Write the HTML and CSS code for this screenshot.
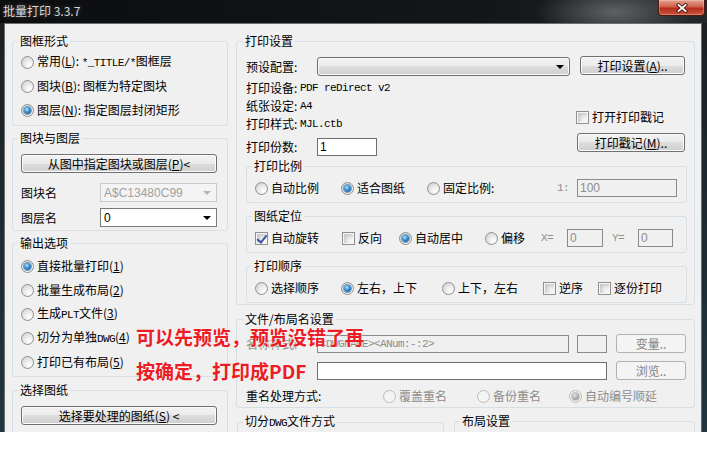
FILE: index.html
```html
<!DOCTYPE html>
<html>
	<head>
		<meta charset="UTF-8">
		<title>批量打印 3.3.7</title>
		<link rel="stylesheet" href="styles.css">
	</head>
	<body>
		<div class="window">
			<div class="titlebar">
				<span class="title">批量打印 3.3.7</span>
				<div class="close">
					<svg width="14" height="10" viewBox="0 0 14 10">
						<path d="M3.5 2 L10.5 8 M10.5 2 L3.5 8" stroke="#4a160d" stroke-width="3.6" stroke-linecap="square" fill="none"/>
						<path d="M3.5 2 L10.5 8 M10.5 2 L3.5 8" stroke="#fff" stroke-width="1.8" stroke-linecap="square" fill="none"/>
					</svg>
				</div>
			</div>
			<div class="frame">
				<div class="client">
					<div class="col-left">
						<fieldset class="grp g1">
							<legend>图框形式</legend>
							<label class="opt r24"><span class="radio"></span><span>常用(<u>L</u>): <span class="mono">*_TITLE/*</span>图框层</span></label>
							<label class="opt r24"><span class="radio"></span><span>图块(<u>B</u>): 图框为特定图块</span></label>
							<label class="opt r24"><span class="radio on"></span><span>图层(<u>N</u>): 指定图层封闭矩形</span></label>
						</fieldset>

						<fieldset class="grp g2">
							<legend>图块与图层</legend>
							<div class="btn"><span>从图中指定图块或图层(<u>P</u>)&lt;</span></div>
							<div class="field-row first">
								<span class="lbl">图块名</span>
								<div class="combo dis"><span>A$C13480C99</span><i class="arrow"></i></div>
							</div>
							<div class="field-row">
								<span class="lbl">图层名</span>
								<div class="combo"><span>0</span><i class="arrow"></i></div>
							</div>
						</fieldset>

						<fieldset class="grp g3">
							<legend>输出选项</legend>
							<label class="opt r24"><span class="radio on"></span><span>直接批量打印(<u>1</u>)</span></label>
							<label class="opt r24"><span class="radio"></span><span>批量生成布局(<u>2</u>)</span></label>
							<label class="opt r24"><span class="radio"></span><span>生成<span class="mono">PLT</span>文件(<u>3</u>)</span></label>
							<label class="opt r24"><span class="radio"></span><span>切分为单独<span class="mono">DWG</span>(<u>4</u>)</span></label>
							<label class="opt r24"><span class="radio"></span><span>打印已有布局(<u>5</u>)</span></label>
						</fieldset>

						<fieldset class="grp g4">
							<legend>选择图纸</legend>
							<div class="btn"><span>选择要处理的图纸(<u>S</u>) &lt;</span></div>
						</fieldset>
					</div>

					<div class="col-right">
						<fieldset class="grp g-print">
							<legend>打印设置</legend>
							<div class="pt">
								<div class="pt-left">
									<div class="row-a">
										<span class="lbl">预设配置:</span>
										<div class="combo btnlike"><span></span><i class="arrow"></i></div>
									</div>
									<div class="info">
										<div>打印设备: <span class="mono">PDF reDirect v2</span></div>
										<div>纸张设定: <span class="mono">A4</span></div>
										<div>打印样式: <span class="mono">MJL.ctb</span></div>
									</div>
									<div class="copies">
										<span class="lbl">打印份数:</span>
										<div class="input w60">1</div>
									</div>
								</div>
								<div class="pt-right">
									<div class="btn w105"><span>打印设置(<u>A</u>)..</span></div>
									<label class="opt stamp"><span class="chk"></span><span>打开打印戳记</span></label>
									<div class="btn w108 stamp-btn"><span>打印戳记(<u>M</u>)..</span></div>
								</div>
							</div>

							<fieldset class="grp sub first">
								<legend>打印比例</legend>
								<div class="row22">
									<label class="opt w86"><span class="radio"></span><span>自动比例</span></label>
									<label class="opt w86"><span class="radio on"></span><span>适合图纸</span></label>
									<label class="opt"><span class="radio"></span><span>固定比例:</span></label>
									<span class="gray mono ratio">1:</span>
									<div class="input dis w100">100</div>
								</div>
							</fieldset>

							<fieldset class="grp sub">
								<legend>图纸定位</legend>
								<div class="row22">
									<label class="opt w87"><span class="chk on"></span><span>自动旋转</span></label>
									<label class="opt w57"><span class="chk"></span><span>反向</span></label>
									<label class="opt w86"><span class="radio on"></span><span>自动居中</span></label>
									<label class="opt w56"><span class="radio"></span><span>偏移</span></label>
									<span class="gray mono w26">X=</span>
									<div class="input dis w36">0</div>
									<span class="gray mono w26 y-lbl">Y=</span>
									<div class="input dis w35">0</div>
								</div>
							</fieldset>

							<fieldset class="grp sub">
								<legend>打印顺序</legend>
								<div class="row22">
									<label class="opt w86"><span class="radio"></span><span>选择顺序</span></label>
									<label class="opt w101"><span class="radio on"></span><span>左右，上下</span></label>
									<label class="opt w101"><span class="radio"></span><span>上下，左右</span></label>
									<label class="opt w55"><span class="chk"></span><span>逆序</span></label>
									<label class="opt"><span class="chk"></span><span>逐份打印</span></label>
								</div>
							</fieldset>
						</fieldset>

						<fieldset class="grp g-file">
							<legend>文件/布局名设置</legend>
							<div class="frow">
								<span class="lbl gray">名称样式:</span>
								<div class="input dis w252"><span class="mono">&lt;DWGNAME&gt;&lt;ANum:-:2&gt;</span></div>
								<div class="input dis w30 gap8"></div>
								<div class="btn dis w70 gap9"><span>变量..</span></div>
							</div>
							<div class="frow second">
								<span class="lbl"></span>
								<div class="input w290"></div>
								<div class="btn dis w70 gap9"><span>浏览..</span></div>
							</div>
							<div class="frow third">
								<span class="lbl wide">重名处理方式:</span>
								<label class="opt w94 gray"><span class="radio dis"></span><span>覆盖重名</span></label>
								<label class="opt w92 gray"><span class="radio dis"></span><span>备份重名</span></label>
								<label class="opt gray"><span class="radio dis on"></span><span>自动编号顺延</span></label>
							</div>
						</fieldset>

						<div class="bottom-row">
							<fieldset class="grp split">
								<legend>切分<span class="mono">DWG</span>文件方式</legend>
							</fieldset>
							<fieldset class="grp layout">
								<legend>布局设置</legend>
							</fieldset>
						</div>
					</div>

					<div class="note">可以先预览，预览没错了再<br>按确定，打印成PDF</div>
				</div>
			</div>
		</div>
	</body>
</html>
```

FILE: styles.css
```css
* {
	margin: 0;
	padding: 0;
	box-sizing: border-box;
}
body {
	background: #fff;
	font: 12px/14px "Noto Sans CJK SC", "Liberation Sans", sans-serif;
	color: #000;
}
u {
	text-decoration: underline;
}
.mono {
	font-family: "Liberation Mono", "Noto Sans CJK SC", monospace;
	font-size: 11px;
	letter-spacing: -0.6px;
}
.gray {
	color: #8d8d8d;
}

/* window chrome */
.window {
	width: 707px;
	height: 432px;
	overflow: hidden;
	display: flex;
	flex-direction: column;
	background: linear-gradient(#1c1f22, #203640);
}
.titlebar {
	height: 23px;
	flex: none;
	display: flex;
	align-items: flex-start;
	padding-left: 3px;
	background:
		radial-gradient(ellipse 80px 28px at 615px 12px, rgba(100,104,108,.9), rgba(100,104,108,0)),
		linear-gradient(to right, #0b0d0f, #14171a 70%, #24282b);
}
.title {
	margin-top: 4px;
	color: #d8d8d8;
	text-shadow: 0 0 5px rgba(255,255,255,.3);
}
.close {
	margin-left: auto;
	margin-right: 2px;
	width: 47px;
	height: 16px;
	border: 1px solid #4d1810;
	border-top: none;
	border-radius: 0 0 4px 4px;
	background: linear-gradient(#e4a190, #d0604a 45%, #b62d1b 55%, #c9563d);
	box-shadow: inset 0 0 0 1px rgba(255,255,255,.25);
	display: flex;
	align-items: center;
	justify-content: center;
}
.frame {
	flex: 1;
	min-height: 0;
	display: flex;
	padding: 0 5px 0 4px;
}
.client {
	flex: 1;
	position: relative;
	display: flex;
	align-items: flex-start;
	gap: 8px;
	padding: 10px 6px 0 7px;
	background: #f0f0f0;
	border: 1px solid #6d6d6d;
	border-bottom: none;
	overflow: hidden;
}
.col-left {
	width: 216px;
	flex: none;
	display: flex;
	flex-direction: column;
}
.col-right {
	width: 459px;
	flex: none;
	display: flex;
	flex-direction: column;
}

/* group boxes */
.grp {
	flex: none;
	border: 1px solid #d5dfe5;
	border-radius: 3px;
	min-width: 0;
	padding: 0 10px 0 8px;
}
legend {
	margin-left: -3px;
	padding: 0 2px;
	line-height: 14px;
}
.g1 {
	padding-top: 2px;
	padding-bottom: 3px;
}
.g2 {
	margin-top: 5px;
	padding-top: 9px;
	padding-bottom: 3px;
}
.g3 {
	margin-top: 5px;
	padding-top: 4px;
	padding-bottom: 2px;
}
.g4 {
	margin-top: 6px;
	padding-top: 9px;
	padding-bottom: 10px;
}

/* controls */
.opt {
	display: flex;
	align-items: center;
	gap: 3px;
	white-space: nowrap;
	flex: none;
}
.r24 {
	height: 24px;
}
.radio {
	width: 13px;
	height: 13px;
	flex: none;
	border-radius: 50%;
	border: 1px solid #8e8f8f;
	background: radial-gradient(circle at 70% 75%, #ffffff 0, #ececec 40%, #cbcbcb 100%);
	display: flex;
	align-items: center;
	justify-content: center;
}
.radio.on::after {
	content: "";
	width: 7px;
	height: 7px;
	border-radius: 50%;
	background: radial-gradient(circle at 40% 35%, #b8e6ff 0, #3a93d8 40%, #0c4785 100%);
	box-shadow: 0 0 0 1px #7c9bb8;
}
.radio.dis {
	border-color: #bcbcbc;
	background: #f4f4f4;
}
.radio.dis.on::after {
	background: radial-gradient(circle at 40% 35%, #e6e6e6 0, #a4a4a4 60%, #8a8a8a 100%);
	box-shadow: 0 0 0 1px #c4c4c4;
}
.chk {
	width: 13px;
	height: 13px;
	flex: none;
	position: relative;
	border: 1px solid #8e8f8f;
	background: #f4f4f4;
	box-shadow: inset 0 0 0 1px #f7f7f7, inset 3px 3px 4px #c4c4c4;
}
.chk.on::after {
	content: "";
	position: absolute;
	left: 3px;
	top: 0;
	width: 4px;
	height: 8px;
	border: solid #3a59a6;
	border-width: 0 2px 2px 0;
	transform: rotate(40deg);
}
.btn {
	height: 19px;
	border: 1px solid #707070;
	border-radius: 3px;
	background: linear-gradient(#f2f2f2 0, #ebebeb 50%, #dddddd 50%, #cfcfcf 100%);
	box-shadow: inset 0 0 0 1px #fbfbfb;
	display: flex;
	align-items: center;
	justify-content: center;
	white-space: pre;
	flex: none;
}
.btn.dis {
	border-color: #adb2b5;
	background: #f4f4f4;
	box-shadow: none;
	color: #838383;
}
.combo {
	flex: 1;
	height: 19px;
	display: flex;
	align-items: center;
	padding: 0 5px 0 3px;
	border: 1px solid #7a7a7a;
	background: #fff;
	font-family: "Liberation Sans", "Noto Sans CJK SC", sans-serif;
}
.combo span {
	flex: 1;
}
.arrow {
	width: 0;
	height: 0;
	border-top: 4px solid #000;
	border-left: 4px solid transparent;
	border-right: 4px solid transparent;
}
.combo.dis {
	border-color: #c9c9c9;
	background: #f4f4f4;
	color: #a0a0a0;
}
.combo.dis .arrow {
	border-top-color: #b4b4b4;
}
.combo.btnlike {
	border-color: #707070;
	border-radius: 3px;
	background: linear-gradient(#f2f2f2 0, #ebebeb 50%, #dddddd 50%, #cfcfcf 100%);
	box-shadow: inset 0 0 0 1px #fbfbfb;
}
.input {
	height: 18px;
	flex: none;
	display: flex;
	align-items: center;
	padding-left: 2px;
	border: 1px solid #6f6f6f;
	background: #fff;
	font-family: "Liberation Sans", "Noto Sans CJK SC", sans-serif;
}
.input.dis {
	background: #f0f0f0;
	color: #8c8c8c;
	border-color: #8a8a8a;
}

/* left column rows */
.field-row {
	display: flex;
	align-items: center;
	height: 19px;
}
.field-row.first {
	margin-top: 10px;
	margin-bottom: 6px;
}
.field-row .lbl {
	width: 79px;
	flex: none;
}

/* print settings */
.g-print {
	padding: 8px 7px 1px 9px;
}
.pt {
	display: flex;
}
.pt-left {
	width: 330px;
	flex: none;
}
.pt-right {
	width: 111px;
	flex: none;
	padding-right: 2px;
	display: flex;
	flex-direction: column;
	align-items: flex-end;
}
.row-a {
	display: flex;
	align-items: center;
	height: 21px;
}
.row-a .lbl,
.copies .lbl {
	width: 71px;
	flex: none;
}
.row-a .combo {
	width: 253px;
	flex: none;
}
.info {
	margin-top: 2px;
}
.info div {
	height: 18px;
	display: flex;
	align-items: center;
	white-space: pre;
}
.copies {
	margin-top: 5px;
	display: flex;
	align-items: center;
	height: 18px;
}
.stamp {
	align-self: flex-start;
	height: 14px;
	margin-top: 35px;
}
.stamp-btn {
	margin-top: 9px;
}
.sub {
	margin-top: 6px;
	padding: 4px 9px 3px 8px;
}
.sub.first {
	margin-top: 3px;
}
.row22 {
	display: flex;
	align-items: center;
	height: 22px;
}
.ratio {
	margin-left: auto;
	margin-right: 8px;
}
.y-lbl {
	margin-left: 9px;
}

/* file names */
.g-file {
	margin-top: 7px;
	padding: 8px 7px 2px 9px;
}
.frow {
	display: flex;
	align-items: center;
	height: 19px;
}
.frow.second {
	margin-top: 8px;
}
.frow.third {
	margin-top: 7px;
	height: 18px;
}
.frow .lbl {
	width: 71px;
	flex: none;
}
.frow .lbl.wide {
	width: 137px;
}
.frow .input {
	color: #8c8c8c;
}
.gap8 {
	margin-left: 8px;
}
.gap9 {
	margin-left: 9px;
}
.bottom-row {
	display: flex;
	gap: 10px;
	margin-top: 6px;
	padding-left: 1px;
	flex: none;
}
.split {
	width: 207px;
	height: 40px;
}
.layout {
	flex: 1;
	height: 40px;
}

/* widths */
.w26 { width: 26px; flex: none; }
.w30 { width: 30px; }
.w35 { width: 35px; }
.w36 { width: 36px; }
.w55 { width: 55px; }
.w56 { width: 56px; }
.w57 { width: 57px; }
.w60 { width: 60px; }
.w70 { width: 70px; }
.w86 { width: 86px; }
.w87 { width: 87px; }
.w92 { width: 92px; }
.w94 { width: 94px; }
.w100 { width: 100px; }
.w101 { width: 101px; }
.w105 { width: 105px; }
.w108 { width: 108px; }
.w252 { width: 252px; }
.w290 { width: 290px; }

/* red note over the dialog */
.note {
	position: absolute;
	left: 131px;
	top: 296px;
	color: #ec1c24;
	font-size: 19px;
	font-weight: bold;
	line-height: 34px;
	white-space: nowrap;
	text-shadow: 0 0 2px #fff;
}
```
